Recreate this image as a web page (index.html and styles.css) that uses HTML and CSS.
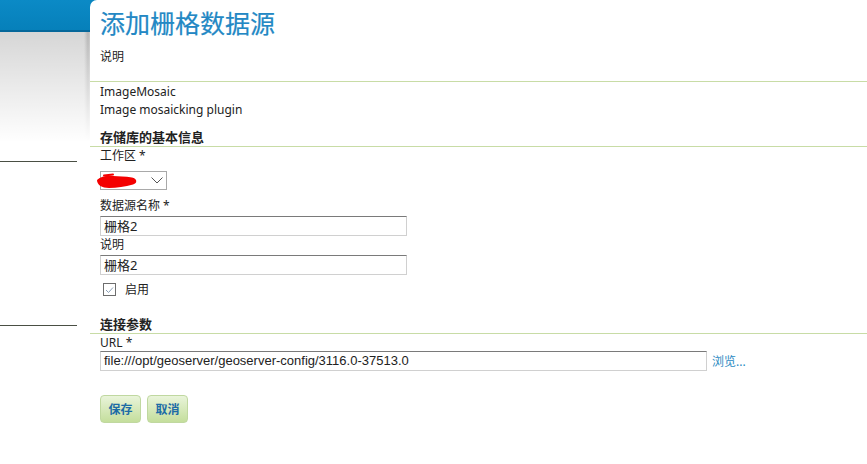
FILE: index.html
```html
<!DOCTYPE html>
<html lang="zh">
<head>
<meta charset="utf-8">
<title>添加栅格数据源</title>
<link rel="stylesheet" href="styles.css">
</head>
<body>
<div class="layout">
  <aside class="sidebar">
    <div class="sidebar-head"></div>
    <div class="sidebar-fade"></div>
    <hr class="side-rule rule-a">
    <hr class="side-rule rule-b">
  </aside>
  <main class="page">
    <h1 class="title">添加栅格数据源</h1>
    <p class="desc">说明</p>
    <div class="info">
      <p class="line">ImageMosaic</p>
      <p class="line">Image mosaicking plugin</p>
    </div>
    <h2 class="section">存储库的基本信息</h2>
    <label class="label">工作区 *</label>
    <div class="select-wrap">
      <div class="select">
        <svg class="chev" width="12" height="7" viewBox="0 0 12 7"><path d="M0.5 0.5 L6 6 L11.5 0.5" fill="none" stroke="#555" stroke-width="1"/></svg>
      </div>
      <svg class="scribble" width="44" height="18" viewBox="0 0 44 18"><path d="M2 8 C 6 4, 12 3.5, 18 4 C 24 4.5, 30 4, 37 5.5 C 42 6.5, 43 11, 38 12.5 C 30 14.5, 22 16, 14 16 C 7 16, 2 13, 2 8 Z" fill="#f40000"/><path d="M9 3.5 L18 2.5" stroke="#f40000" stroke-width="2" stroke-linecap="round" fill="none"/></svg>
    </div>
    <label class="label label-gap">数据源名称 *</label>
    <div class="input short">栅格2</div>
    <label class="label">说明</label>
    <div class="input short">栅格2</div>
    <div class="check-row">
      <span class="checkbox"><svg width="11" height="10" viewBox="0 0 11 10"><path d="M2 5 L4.5 7.5 L9 2.5" fill="none" stroke="#8aa0b8" stroke-width="1"/></svg></span>
      <span class="check-label">启用</span>
    </div>
    <h2 class="section section-2">连接参数</h2>
    <label class="label">URL *</label>
    <div class="url-row">
      <div class="input long">file:///opt/geoserver/geoserver-config/3116.0-37513.0</div>
      <a class="browse" href="#">浏览...</a>
    </div>
    <div class="buttons">
      <button class="btn">保存</button>
      <button class="btn">取消</button>
    </div>
  </main>
</div>
</body>
</html>
```

FILE: styles.css
```css
html {
  background: #fff linear-gradient(#0a86c0, #0a86c0) no-repeat 0 0 / 100px 31px;
}
body {
  margin: 0;
  font-family: "Noto Sans", "Noto Sans CJK SC", sans-serif;
  font-size: 12px;
  color: #222;
}
.layout {
  display: grid;
  grid-template-columns: 90px 1fr;
  min-height: 464px;
}
.sidebar {
  display: flex;
  flex-direction: column;
}
.sidebar-head {
  height: 30px;
  background: linear-gradient(#0b8ac6, #0680ba);
  border-bottom: 2px solid #05679a;
}
.sidebar-fade {
  height: 110px;
  background:
    linear-gradient(to bottom, rgba(255,255,255,0), #fff),
    linear-gradient(to right, #d6d6d6 calc(100% - 6px), #b4b4b4 calc(100% - 2px), #c8c8c8 100%);
}
.side-rule {
  width: 77px;
  margin: 0;
  border: 0;
  border-top: 1px solid #4a4f44;
}
.rule-a { margin-top: 19px; }
.rule-b { margin-top: 163px; }

.page {
  background: #fff;
  border-top-left-radius: 7px;
  padding-left: 10px;
  display: flex;
  flex-direction: column;
}
.title {
  margin: 0;
  padding-top: 6px;
  font-size: 25px;
  line-height: 34px;
  font-weight: normal;
  color: #2388c4;
  -webkit-text-stroke: 0.2px #2388c4;
}
.desc {
  margin: 9px 0 0;
  line-height: 16px;
}
.info {
  margin-left: -10px;
  padding-left: 10px;
  margin-top: 16px;
  border-top: 1px solid #c8dca6;
  padding-top: 2px;
}
.line {
  margin: 0 0 2px;
  line-height: 16px;
}
.section {
  margin: 9px 0 0;
  margin-left: -10px;
  padding-left: 10px;
  font-size: 13px;
  font-weight: bold;
  line-height: 17px;
  border-bottom: 1px solid #c8dca6;
  color: #222;
}
.label {
  display: block;
  line-height: 16px;
  margin-top: 1px;
}
.select-wrap {
  position: relative;
  margin-top: 7px;
  width: 67px;
  height: 19px;
}
.select {
  box-sizing: border-box;
  width: 67px;
  height: 19px;
  border: 1px solid #a9a9a9;
  background: #fff;
  display: flex;
  align-items: center;
  justify-content: flex-end;
  padding-right: 3px;
}
.scribble {
  position: absolute;
  left: -5px;
  top: 1px;
}
.label-gap { margin-top: 8px; }
.input {
  box-sizing: border-box;
  height: 20px;
  border: 1px solid #d0d0d0;
  border-top-color: #7a7a7a;
  padding: 0 3px;
  line-height: 18px;
  font-size: 13px;
  color: #222;
  margin-top: 2px;
}
.short { width: 307px; }
.long {
  width: 607px;
  font-family: "Liberation Sans", Arial, sans-serif;
  font-size: 13px;
  margin-top: 0;
}
.check-row {
  display: flex;
  align-items: center;
  gap: 9px;
  margin-top: 8px;
  padding-left: 3px;
  height: 13px;
}
.checkbox {
  box-sizing: border-box;
  width: 13px;
  height: 13px;
  border: 1px solid #6d6d6d;
  display: flex;
  align-items: center;
  justify-content: center;
}
.check-label {
  font-size: 12px;
  line-height: 16px;
}
.section-2 { margin-top: 20px; }
.url-row {
  display: flex;
  align-items: center;
  gap: 5px;
}
.browse {
  color: #2a8ac2;
  text-decoration: none;
  font-size: 12px;
}
.buttons {
  display: flex;
  gap: 6px;
  margin-top: 24px;
}
.btn {
  box-sizing: border-box;
  width: 41px;
  height: 28px;
  border: 1px solid #c0d8a0;
  border-radius: 4px;
  background: linear-gradient(#e9f4da, #c4de9c);
  color: #1d6ca6;
  font-family: "Noto Sans", "Noto Sans CJK SC", sans-serif;
  font-weight: bold;
  font-size: 12px;
  padding: 0;
}
```
